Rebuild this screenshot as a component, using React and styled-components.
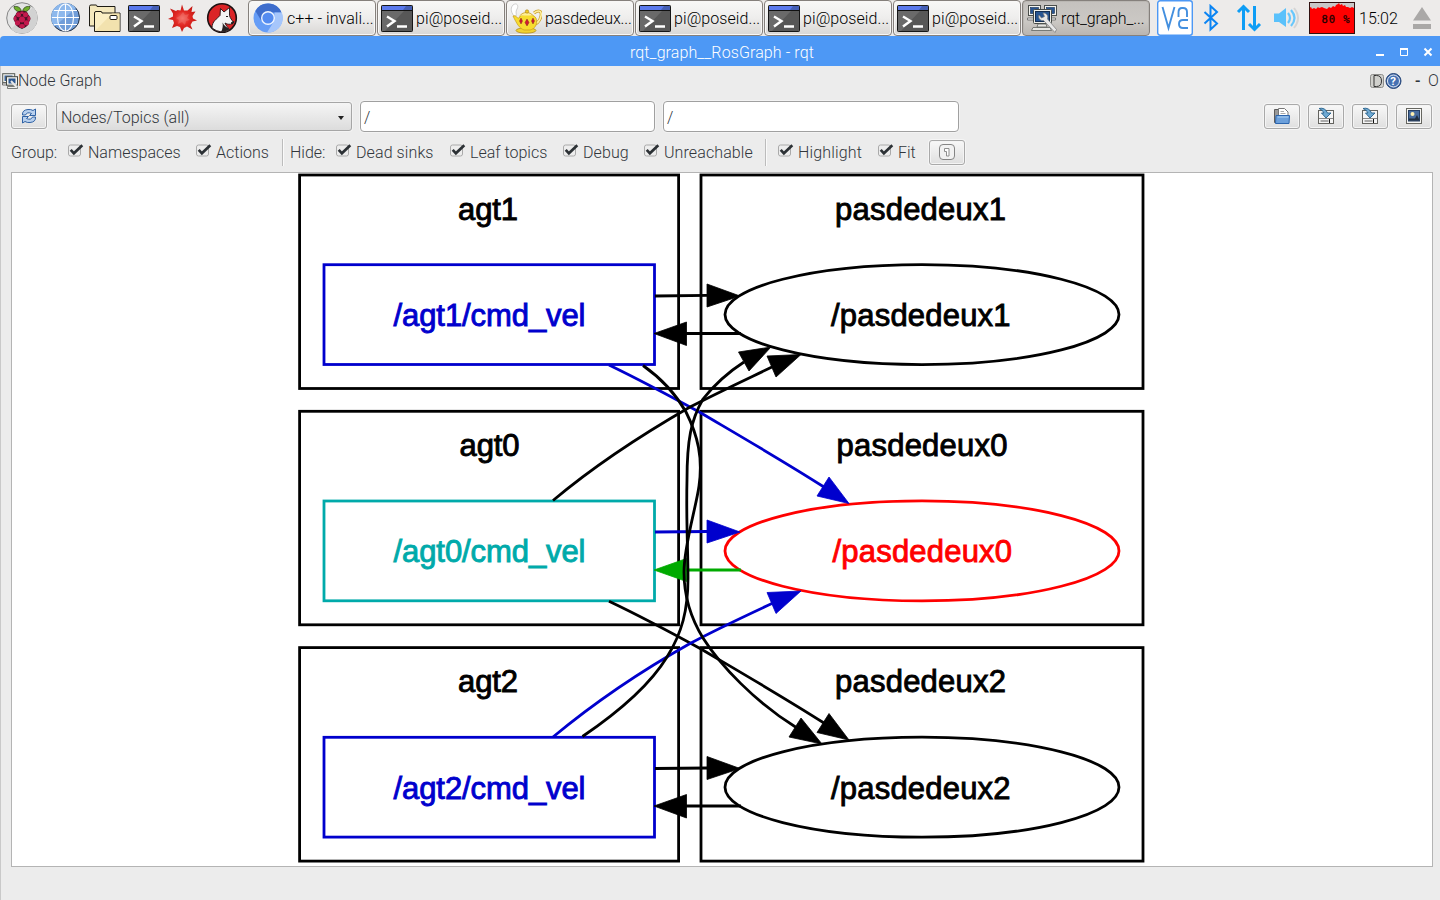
import React from 'react';
import styled, { createGlobalStyle } from 'styled-components';

const Global = createGlobalStyle`
  * { box-sizing: border-box; }
  body { margin: 0; background: #ececec; overflow: hidden; }
`;

const Screen = styled.div`
  width: 1440px;
  height: 900px;
  display: flex;
  flex-direction: column;
  background: #ececec;
  color: #31363b;
  font-family: Roboto, sans-serif;
  font-weight: 300;
  font-size: 16px;
  line-height: 20px;
  white-space: nowrap;
  overflow: hidden;
`;

const Taskbar = styled.div`
  height: 36px;
  flex: none;
  display: flex;
  background: #edebea;
  color: #000;
`;

const Launchers = styled.div`
  width: 248px;
  flex: none;
  display: flex;
  gap: 7px;
  padding: 2px 0 0 6px;
`;

const Tasks = styled.div`
  display: flex;
  gap: 1px;
  width: 909px;
  flex: none;
`;

const Task = styled.div`
  width: 128px;
  height: 36px;
  flex: none;
  display: flex;
  align-items: center;
  gap: 3px;
  padding-left: 3px;
  border: 1px solid #85807c;
  border-radius: 4px;
  background: ${(p) => (p.$active ? 'linear-gradient(#c4c1be, #cbc8c4 60%, #b9b5b1)' : 'linear-gradient(#f8f8f7, #eeedec 50%, #d9d7d5)')};
  box-shadow: inset 0 0 0 1px ${(p) => (p.$active ? '#bab7b3' : '#f8f7f6')};
`;

const TaskLabel = styled.span`
  padding-top: 2px;
  letter-spacing: ${(p) => p.$ls || 0}px;
`;

const Tray = styled.div`
  flex: 1;
  display: flex;
  align-items: center;
`;

const Clock = styled.span`
  width: 53px;
  padding: 1px 0 0 4px;
`;

const CpuMeter = styled.svg`
  display: block;
  margin-left: 8px;
`;

const TitleBar = styled.div`
  height: 30px;
  flex: none;
  display: flex;
  align-items: center;
  justify-content: flex-end;
  background: #4d98f5;
  color: #fff;
  border-top-left-radius: 4px;
`;

const WindowTitle = styled.div`
  flex: 1;
  padding: 3px 0 0 630px;
  letter-spacing: 0.1px;
`;

const DockHeader = styled.div`
  height: 30px;
  flex: none;
  display: flex;
  align-items: center;
  padding: 0 3px 1px 1px;
  border-left: 1px solid #c9c9c9;
`;

const DockTitle = styled.span`
  flex: 1;
`;

const DockMark = styled.span`
  width: ${(p) => p.$w}px;
  font-weight: ${(p) => (p.$strong ? 500 : 300)};
`;

const Body = styled.div`
  flex: 1;
  display: flex;
  flex-direction: column;
  padding: 3px 7px 0 10px;
  border-left: 1px solid #c9c9c9;
`;

const FilterRow = styled.div`
  height: 34px;
  flex: none;
  display: flex;
  align-items: center;
  padding-right: 1px;
`;

const ToolButton = styled.button`
  width: 36px;
  height: 25px;
  flex: none;
  display: flex;
  align-items: center;
  justify-content: center;
  padding: 0;
  margin: 0 ${(p) => p.$gap || 0}px 0 0;
  border: 1px solid #a9a9a9;
  border-radius: 3px;
  background: linear-gradient(#f8f8f8, #dfdfdf);
  box-shadow: 0 0 0 1px #f5f5f5, inset 0 0 0 1px #f4f4f4;
`;

const Select = styled.div`
  width: 296px;
  height: 29px;
  display: flex;
  align-items: center;
  justify-content: space-between;
  padding: 3px 7px 0 4px;
  margin-right: 8px;
  border: 1px solid #a6a6a6;
  border-radius: 3px;
  background: linear-gradient(#f5f5f5, #dcdcdc);
  box-shadow: 0 0 0 1px #f3f3f3;
`;

const Arrow = styled.span`
  border: 3.5px solid transparent;
  border-top: 4px solid #222;
  border-bottom: 0;
  margin-top: 1px;
`;

const Field = styled.div`
  width: ${(p) => p.$w}px;
  height: 31px;
  padding: 6px 3px;
  margin-right: 8px;
  border: 1px solid #a0a0a0;
  border-radius: 4px;
  background: #fff;
  box-shadow: 0 0 0 1px #f3f3f3;
`;

const Spacer = styled.div`
  flex: 1;
`;

const OptionRow = styled.div`
  height: 39px;
  flex: none;
  display: flex;
  align-items: center;
  padding-bottom: 1px;
`;

const Caption = styled.span`
  width: ${(p) => p.$w}px;
  padding-top: 2px;
`;

const Option = styled.label`
  width: ${(p) => p.$w}px;
  display: flex;
  align-items: center;
  gap: 4px;
  letter-spacing: ${(p) => p.$ls || 0}px;
`;

const OptionText = styled.span`
  padding-top: 1px;
`;

const Divider = styled.div`
  width: ${(p) => p.$w}px;
  height: 27px;
  border-left: 1px solid #bcbcbc;
  box-shadow: inset 1px 0 #fafafa;
`;

const GraphView = styled.div`
  height: 695px;
  width: 1422px;
  flex: none;
  border: 1px solid #b4b4b4;
  background: #fff;
`;

const GraphSvg = styled.svg`
  display: block;
  font-family: "Liberation Sans", Arial, sans-serif;
  font-size: 31px;
`;

const RaspberryIcon = () => (
  <svg width="32" height="32" viewBox="0 0 32 32">
    <circle cx="16" cy="16" r="15.3" fill="#e4e4e4" stroke="#858585" />
    <path d="M5 27 27 5A15 15 0 0 1 5 27z" fill="#d2d2d2" />
    <path d="M15.500 10C10 10 8 7 8 4.500c4-.5 7 1 7.500 5.500zm1 0C22 10 24 7 24 4.500c-4-.5-7 1-7.500 5.500z" fill="#6fae2c" stroke="#253c14" strokeWidth=".7" />
    <path d="M16 9c4-1 6 2 6.500 4 2.500 2 2.500 5 .5 7-.5 4-3 5-7 7-4-2-6.500-3-7-7-2-2-2-5 .5-7C10 11 12 8 16 9z" fill="#4a1026" />
    <g fill="#c3184d">
      <circle cx="16" cy="17.500" r="3" /><circle cx="12.500" cy="12.800" r="2.500" /><circle cx="19.500" cy="12.800" r="2.500" />
      <ellipse cx="9.200" cy="16.500" rx="1.500" ry="2.500" /><ellipse cx="22.800" cy="16.500" rx="1.500" ry="2.500" />
      <circle cx="11.500" cy="20.800" r="2.600" /><circle cx="20.500" cy="20.800" r="2.600" /><ellipse cx="16" cy="24" rx="2.800" ry="2.100" /><ellipse cx="16" cy="10.800" rx="1.800" ry="1.200" />
    </g>
  </svg>
);

const GlobeIcon = () => (
  <svg width="32" height="32" viewBox="0 0 32 32" style={{ marginLeft: 4 }}>
    <circle cx="16.500" cy="15.500" r="14" fill="#709dd9" stroke="#222c3d" />
    <path d="M5.500 24.500 27 6A14 14 0 0 0 5.500 24.500z" fill="#8db8ec" />
    <g fill="none" stroke="#fff" strokeWidth="1.100">
      <path d="M16.500 2v27M3 15.500h27M5 8.500h23M5 22.500h23" /><ellipse cx="16.500" cy="15.500" rx="8" ry="13.500" />
    </g>
  </svg>
);

const FoldersIcon = () => (
  <svg width="33" height="32" viewBox="0 0 33 32">
    <path d="M1.500 24V4.500q0-1.500 1.500-1.500h5q1 0 1 1.500H27V24z" fill="#f4e8bd" stroke="#1d1b14" />
    <path d="M6.500 29.500V11Q6.500 9.500 8 9.500h5q1 0 1 1.500h18v18.500z" fill="#faeec4" stroke="#1d1b14" />
    <path d="M7 29 24 11.500h7.500V29z" fill="#f2e2ae" />
    <rect x="22" y="13.500" width="7" height="4" rx="1" fill="#fff" stroke="#1d1b14" />
  </svg>
);

const TerminalIcon = () => (
  <svg width="32" height="32" viewBox="0 0 32 32" style={{ flex: 'none' }}>
    <rect x=".5" y="3.500" width="31" height="26" rx=".8" fill="#575757" stroke="#161616" />
    <path d="M1 29V9h22L4 29z" fill="#6a6a6a" />
    <path d="M1 4h30v4H1z" fill="#5a79ec" /><path d="M25 4h6v4h-9z" fill="#455fb5" /><path d="M1 8.500h30" stroke="#111" />
    <path d="m6 14.500 7.500 4.500-7.500 5.500M16 24.500h10" stroke="#fff" strokeWidth="2.400" fill="none" />
  </svg>
);

const SpikyIcon = () => (
  <svg width="32" height="32" viewBox="0 0 32 32">
    <defs><radialGradient id="spike"><stop offset="0" stopColor="#f26a62" /><stop offset=".5" stopColor="#e22924" /><stop offset="1" stopColor="#c41914" /></radialGradient></defs>
    <path d="m10.500 8 3 0.500 1.500-6 2 6 3.500 0L25.500 4 24.500 10l4-.5-3 4.500 .5 2.500 4 2-4.500 1L23.500 23l2 4.500-5.500-3-3 1.500L15 30l-2-5-3-1L5 26l2-5-1-3L1 17l5-2.500 0-3L3 6.500l6 2.500z" fill="url(#spike)" />
    <path d="m16 10 2 3 4-1-2 4 3 2-4 1-1 4-3-3-4 2 1-4-3-2 4-2z" fill="#f58a82" opacity=".35" />
  </svg>
);

const WolfIcon = () => (
  <svg width="32" height="32" viewBox="0 0 32 32">
    <circle cx="16" cy="16" r="14.300" fill="#db2427" stroke="#1c1213" strokeWidth="1.600" />
    <path d="M6 26C6 19 11 17 14 13.500L14.500 6.500 18 10 23.500 5.500 23.500 13.500C24 16 26 18 27.500 20.500c-1.500 2-4 2-6.500 1.500l-2-1c1 3 3 4 4.500 7q-9 4.500-17.500-2z" fill="#f3f3f3" stroke="#241314" strokeWidth=".9" />
    <path d="M16.500 20.500c1.500 3.500 4.500 4.500 7 7q-3.500 2.300-8.500 2.300 2.500-4 1.500-9.300z" fill="#272122" /><path d="M25 21 28 19.500l-1.500 2.500zM20 14.500h2" stroke="#222" />
  </svg>
);

const ChromiumIcon = () => (
  <svg width="32" height="32" viewBox="0 0 32 32" style={{ flex: 'none' }}>
    <circle cx="16" cy="16" r="14.500" fill="#669df6" />
    <path d="M3.400 9A14.500 14.500 0 0 1 29.500 10.500H16L9.500 19z" fill="#3e6dcc" />
    <path d="M29.800 10.500A14.500 14.500 0 0 1 15 30.500l7.500-12V10.500z" fill="#a6c6fb" />
    <circle cx="16" cy="16" r="7" fill="#eff5ff" /><circle cx="16" cy="16" r="5.600" fill="#548bf0" />
  </svg>
);

const TeapotIcon = () => (
  <svg width="32" height="32" viewBox="0 0 32 32" style={{ flex: 'none' }}>
    <path d="M4 14C0 9 1 5 3 3c4-3 6 1 4 4s0 5-1 7z" fill="#fff" stroke="#c4c4c4" strokeWidth=".8" />
    <path d="M24 11c5-4 8-1.500 7 3-1 5-4 8-9 9" fill="none" stroke="#c8a02a" strokeWidth="3" /><path d="M24 11c5-4 8-1.500 7 3-1 5-4 8-9 9" fill="none" stroke="#fff0a0" strokeWidth="1.600" />
    <ellipse cx="16" cy="28.500" rx="10" ry="2.700" fill="#f1d22f" stroke="#aa8217" strokeWidth=".7" />
    <path d="M3 14c4-1 4 3 6 2 1-5 14-5 17 0 2 6-1 11-6 12h-6C9 26 7 22 3 14z" fill="#f7dc2f" stroke="#c79a1c" strokeWidth=".7" />
    <path d="M10 13.500c3-4 10-4 13 0" fill="#fff09a" stroke="#c79a1c" strokeWidth=".8" /><circle cx="17" cy="9.500" r="1.700" fill="#f0cb27" stroke="#a87d14" strokeWidth=".6" />
    <path d="m11 16 1.500 3-1.500 3-1.500-3zM17 17l2 3.500-2 3.500-2-3.500zM23 16l1.500 3-1.500 3-1.500-3z" fill="#d41932" stroke="#6b1616" strokeWidth=".4" />
  </svg>
);

const RqtIcon = () => (
  <svg width="32" height="32" viewBox="0 0 32 32" style={{ flex: 'none' }}>
    {[[2.5, 3.5], [18.5, 3.5]].map(([x, y]) => (
      <g key={x}><rect x={x} y={y} width="12" height="10" fill="#f3f3ef" stroke="#4b4e4b" /><rect x={x + 2} y={y + 2} width="8" height="6" fill="#285491" stroke="#152d50" strokeWidth=".6" /><path d={`M${x - 1} 16h12v2H${x - 1}z`} fill="#eee" stroke="#555" strokeWidth=".7" /></g>
    ))}
    <rect x="7.500" y="7.500" width="18" height="14" rx="1" fill="#f0f0eb" stroke="#454945" /><rect x="9.500" y="9.500" width="14" height="10" fill="#275592" stroke="#142e52" />
    <path d="M12 22h8l1 3H11zM7 25.500h17l1.500 3H5.500z" fill="#e7e7e3" stroke="#60635f" strokeWidth=".8" />
    <path d="M13 13c-1 3 1 6 4.500 5.500L29 30.500l1.500-3L21.500 17c1-3.500-1-6-4.500-6l1.500 3.500-3 1.500z" fill="#e8e8e8" stroke="#777" strokeWidth=".7" />
  </svg>
);

const RqtSmallIcon = () => (
  <svg width="16" height="18" viewBox="0 0 16 18" style={{ flex: 'none' }}>
    <rect x=".7" y="1.700" width="12" height="9" fill="#f1f1ec" stroke="#555a55" /><rect x="2.500" y="3.500" width="8" height="5.500" fill="#3a649b" />
    <path d="M.5 11h4v2h-4z" fill="#eee" stroke="#555" strokeWidth=".8" />
    <rect x="4.500" y="4.700" width="11" height="8.500" fill="#f3f3ee" stroke="#444844" /><rect x="6.500" y="6.500" width="7" height="5" fill="#2b5791" />
    <path d="M5.500 14.500h10v2h-10z" fill="#eee" stroke="#5c605b" strokeWidth=".8" />
    <path d="m9 9 6 6.500" stroke="#e8e8e8" strokeWidth="2" />
  </svg>
);

const VncIcon = () => (
  <svg width="36" height="36" viewBox="0 0 36 36">
    <rect x=".7" y=".7" width="34.600" height="34.600" rx="2.500" fill="#fff" stroke="#4d98f5" strokeWidth="1.400" />
    <path d="m5.500 7 6 21 6-21M21.500 17v-4.500Q21.500 8 25 8h1q4 0 4 4v5M31 20h-5q-4 0-4 4t4 4h5" fill="none" stroke="#438fdf" strokeWidth="1.900" />
  </svg>
);

const BluetoothIcon = () => (
  <svg width="16" height="28" viewBox="0 0 16 28" style={{ marginLeft: 10 }}>
    <path d="M1.500 8 14 19.500 7.500 25.500V2L14 8 1.500 19.500" fill="none" stroke="#0b84f3" strokeWidth="2" />
  </svg>
);

const TrafficIcon = () => (
  <svg width="26" height="28" viewBox="0 0 26 28" style={{ marginLeft: 17 }}>
    <path d="M7.500 26V3M2 8l5.500-5.500L13 8M18.500 2v23M13 20l5.500 5.500L24 20" fill="none" stroke="#0e9df5" strokeWidth="3" />
  </svg>
);

const SpeakerIcon = () => (
  <svg width="28" height="28" viewBox="0 0 28 28" style={{ marginLeft: 11 }}>
    <path d="M1 9.500h5l7-5.500v19L6 18H1z" fill="#5ac1fb" />
    <path d="M15 9q4 5 0 10M18 6q7 8 0 16" fill="none" stroke="#67c7fc" strokeWidth="2.200" /><path d="M21 4q8 10 0 20" fill="none" stroke="#d5d5d5" strokeWidth="2" />
  </svg>
);

const EjectIcon = () => (
  <svg width="18" height="24" viewBox="0 0 18 24" style={{ marginLeft: 5 }}>
    <path d="M9 1 18 14.500H0zM0 18h18v5H0z" fill="#aaa8a7" />
  </svg>
);

const WindowControls = () => (
  <svg width="64" height="30" viewBox="0 0 64 30">
    <path d="M0 19h8" stroke="#fff" strokeWidth="2" />
    <path d="M24.500 12v7.500h7V12" fill="none" stroke="#fff" /><path d="M24 13h8" stroke="#fff" strokeWidth="2" />
    <path d="m48.500 12.500 7 7m0-7-7 7" stroke="#fff" strokeWidth="2" />
  </svg>
);

const DockIcons = () => (
  <svg width="45" height="18" viewBox="0 0 45 18">
    <rect x=".5" y="2.500" width="13" height="13" rx="2" fill="#d0d0cc" stroke="#8d8d8a" />
    <path d="M4 3.500h2.500q5 0 5 5.500t-5 5.500H4z" fill="none" stroke="#333" />
    <circle cx="23.500" cy="9" r="7.500" fill="#345d9f" stroke="#274778" /><circle cx="23.500" cy="9" r="6" fill="#4571b3" stroke="#e8eef7" />
    <text x="20.300" y="13.300" fill="#fff" fontSize="11.500" fontWeight="700">?</text>
  </svg>
);

const RefreshIcon = () => (
  <svg width="16" height="16" viewBox="0 0 16 16">
    <path d="M1.500 7Q1 2 7 1.500q3-.3 5 1L14.500 1v6.500H8.500L10.500 5.500Q6 3.500 4.500 7zM14.500 9q.5 5-5.500 5.500-3 .3-5-1L1.500 15V8.500h6L5.500 10.500Q10 12.500 11.500 9z" fill="#b8d0ee" stroke="#2f62a5" />
  </svg>
);

const OpenIcon = () => (
  <svg width="18" height="18" viewBox="0 0 18 18">
    <path d="M1.500 15.500V2.500h5V6h8v9.500z" fill="#999" stroke="#5c5c5c" /><path d="M5.500 9V1.500h6l3.500 3.500V9z" fill="#fff" stroke="#777" /><path d="M7.500 4.500h3.500m-3.500 2h5" stroke="#aaa" />
    <path d="M3 8.500h13.500L16 16.500H2.500z" fill="#6ca0db" stroke="#2c65ad" /><path d="M4.500 10h11" stroke="#abcff1" />
  </svg>
);

const SaveIcon = () => (
  <svg width="18" height="18" viewBox="0 0 18 18">
    <rect x="1.500" y="3.500" width="15" height="13" fill="#f5f5f5" stroke="#63635f" /><path d="M2 11.500h14" stroke="#888" /><path d="M3.500 14h8" stroke="#aaa" strokeWidth="2" /><path d="M12.500 12v4" stroke="#111" />
    <path d="M2 1.500Q8 0 10.500 6H14L9 11 4.500 6h2.500Q6 3 2 1.500z" fill="#6fa9d2" stroke="#25618c" strokeWidth=".9" />
  </svg>
);

const ImageIcon = () => (
  <svg width="18" height="18" viewBox="0 0 18 18">
    <rect x="1.500" y="1.500" width="15" height="15" fill="#f7f7f5" stroke="#666660" /><rect x="3.500" y="3.500" width="11" height="10.500" fill="#496c9c" stroke="#263e61" />
    <circle cx="7.500" cy="7" r="2" fill="#fff0b0" /><path d="M4 13.500v-2l6 0 2-3.500 2 4v1.500z" fill="#222f3f" />
  </svg>
);

const OneIcon = () => (
  <svg width="16" height="16" viewBox="0 0 16 16">
    <rect x=".5" y=".5" width="15" height="15" rx="3.500" fill="#f2f2f2" stroke="#858585" /><path d="M5.500 4.500h4.500v7.500H7.500V7.500h-2z" fill="#fff" stroke="#8f8f8f" />
  </svg>
);

const CheckIcon = () => (
  <svg width="16" height="16" viewBox="0 0 16 16">
    <rect x=".5" y="1" width="12" height="11" rx="2" fill="#ededed" stroke="#aaa" />
    <path d="m2.700 5.800 3.200 3.500L14.300 1.300" fill="none" stroke="#2c3135" strokeWidth="2.700" />
  </svg>
);

const tasks = [
  ['c++ - invali...', ChromiumIcon, 0.05],
  ['pi@poseid...', TerminalIcon, 0.08],
  ['pasdedeux...', TeapotIcon, -0.1],
  ['pi@poseid...', TerminalIcon, 0.08],
  ['pi@poseid...', TerminalIcon, 0.08],
  ['pi@poseid...', TerminalIcon, 0.08],
  ['rqt_graph_...', RqtIcon, -0.1],
];

const BLUE = '#0000cd';
const rows = [
  { n: 1, y: 0, topic: BLUE, node: '#000' },
  { n: 0, y: 236.3, topic: '#00aaaa', node: '#ff0000' },
  { n: 2, y: 472.6, topic: BLUE, node: '#000' },
];

const edges = [
  { c: '#000', d: 'M655 296 L708 295.300', a: '707,284 740,296 707,307' },
  { c: '#000', d: 'M741 333.500 L686 333.500', a: '686.500,322 654,333.500 686.500,345.500' },
  { c: BLUE, d: 'M655 532 L708 531.500', a: '707,520 740,532 707,543' },
  { c: '#00aa00', d: 'M741 570 L686 570', a: '686.500,558.500 654,570 686.500,581.500' },
  { c: '#000', d: 'M655 768.500 L708 768', a: '707,756.500 740,768.500 707,779.500' },
  { c: '#000', d: 'M741 806 L686 806', a: '686.500,794.500 654,806 686.500,818' },
  { c: BLUE, d: 'M609 365 C640 380 670 396 701 413 C740 436 785 462 824 487', a: '829,477 849,503.500 817,496' },
  { c: '#000', d: 'M609 601.300 C640 616 670 632 701 649 C740 672 785 698 824 723', a: '829,713.500 849,740 817,732.500' },
  { c: '#000', d: 'M553 500.500 C600 461 650 430 690 407 C717 393 745 380 773 366.500', a: '767,356 801,354.500 776,377' },
  { c: BLUE, d: 'M553 737 C600 698 650 666 690 643.500 C717 629 745 616 773 603', a: '767,592.500 801,591 776,613.500' },
  { c: '#000', d: 'M643 365.500 C665 381 678 398 686 412 C698 436 703 458 699 486 C696 508 684 545 684 572 C684 600 692 620 703 638 C720 665 755 702 797 728', a: '801,718 822,744 789,737' },
  { c: '#000', d: 'M582.500 736.500 C620 711 650 685 667 657 C682 633 688 610 688 578 C688 550 686 520 687 480 C687 440 691 420 703 399 C715 384 727 373 744 362', a: '738.500,352 771,347 749,371' },
];

const GraphLabel = ({ x, y, w, color, children }) => (
  <text x={x} y={y} textLength={w} fill={color} stroke={color} strokeWidth=".9">{children}</text>
);

const RosGraph = () => (
  <GraphSvg width="1420" height="693" viewBox="12 173 1420 693">
    {rows.map((r) => (
      <g key={r.n} transform={`translate(0 ${r.y})`} fill="none" strokeWidth="2.800">
        <rect x="299.600" y="175" width="379" height="213.500" stroke="#000" />
        <rect x="701" y="175" width="442" height="213.500" stroke="#000" />
        <rect x="324" y="264.700" width="330.500" height="99.800" stroke={r.topic} />
        <ellipse cx="922" cy="314.600" rx="197" ry="50" stroke={r.node} />
        <GraphLabel x={r.n ? 458 : 459.500} y={219.500} w={60} color="#000">{`agt${r.n}`}</GraphLabel>
        <GraphLabel x={r.n ? 835 : 836.500} y={219.500} w={171} color="#000">{`pasdedeux${r.n}`}</GraphLabel>
        <GraphLabel x={393.500} y={326} w={192} color={r.topic}>{`/agt${r.n}/cmd_vel`}</GraphLabel>
        <GraphLabel x={r.n ? 831 : 832.500} y={326} w={179.500} color={r.node}>{`/pasdedeux${r.n}`}</GraphLabel>
      </g>
    ))}
    {edges.map((e) => (
      <g key={e.d}>
        <path d={e.d} fill="none" stroke={e.c} strokeWidth="2.800" />
        <polygon points={e.a} fill={e.c} stroke={e.c} strokeWidth=".8" />
      </g>
    ))}
  </GraphSvg>
);

const Check = ({ w, ls, children }) => (
  <Option $w={w} $ls={ls}><CheckIcon /><OptionText>{children}</OptionText></Option>
);

export default function App() {
  return (
    <Screen>
      <Global />
      <Taskbar>
        <Launchers>
          <RaspberryIcon /><GlobeIcon /><FoldersIcon /><TerminalIcon /><SpikyIcon /><WolfIcon />
        </Launchers>
        <Tasks>
          {tasks.map(([label, Icon, ls], i) => (
            <Task key={i} $active={i === 6}><Icon /><TaskLabel $ls={ls}>{label}</TaskLabel></Task>
          ))}
        </Tasks>
        <Tray>
          <VncIcon /><BluetoothIcon /><TrafficIcon /><SpeakerIcon />
          <CpuMeter width="46" height="32" viewBox="0 0 46 32">
            <rect width="46" height="32" fill="#c8c8c8" />
            <path d="M0 6l2-1 1 2 2-1 2 1 2-2 1 1 3-1 2 1 3 1 2-2 2 1 2-2 2 1 1-2 2-1 1-1 1 2 2-1 1 2 2-1 1 2 2 0 2 1 2-1 2 1 2 0V32H0z" fill="#f00" />
            <rect x=".5" y=".5" width="45" height="31" fill="none" stroke="#301010" />
            <text x="12.500" y="20.500" fontFamily="DejaVu Sans Mono, monospace" fontSize="10.500" fontWeight="400" textLength="28" fill="#200" stroke="#200" strokeWidth=".3">80 %</text>
          </CpuMeter>
          <Clock>15:02</Clock>
          <EjectIcon />
        </Tray>
      </Taskbar>
      <TitleBar>
        <WindowTitle>rqt_graph__RosGraph - rqt</WindowTitle>
        <WindowControls />
      </TitleBar>
      <DockHeader>
        <RqtSmallIcon />
        <DockTitle>Node Graph</DockTitle>
        <DockIcons />
        <DockMark $w={13} $strong>-</DockMark>
        <DockMark $w={9}>O</DockMark>
      </DockHeader>
      <Body>
        <FilterRow>
          <ToolButton $gap={9}><RefreshIcon /></ToolButton>
          <Select>Nodes/Topics (all)<Arrow /></Select>
          <Field $w={295}>/</Field>
          <Field $w={296}>/</Field>
          <Spacer />
          <ToolButton $gap={8}><OpenIcon /></ToolButton>
          <ToolButton $gap={8}><SaveIcon /></ToolButton>
          <ToolButton $gap={8}><SaveIcon /></ToolButton>
          <ToolButton><ImageIcon /></ToolButton>
        </FilterRow>
        <OptionRow>
          <Caption $w={57}>Group:</Caption>
          <Check w={128}>Namespaces</Check>
          <Check w={86}>Actions</Check>
          <Divider $w={8} />
          <Caption $w={46}>Hide:</Caption>
          <Check w={114} ls={0.1}>Dead sinks</Check>
          <Check w={113}>Leaf topics</Check>
          <Check w={81} ls={0.1}>Debug</Check>
          <Check w={121} ls={0.1}>Unreachable</Check>
          <Divider $w={13} />
          <Check w={100} ls={0.15}>Highlight</Check>
          <Check w={51}>Fit</Check>
          <ToolButton><OneIcon /></ToolButton>
        </OptionRow>
        <GraphView><RosGraph /></GraphView>
      </Body>
    </Screen>
  );
}
